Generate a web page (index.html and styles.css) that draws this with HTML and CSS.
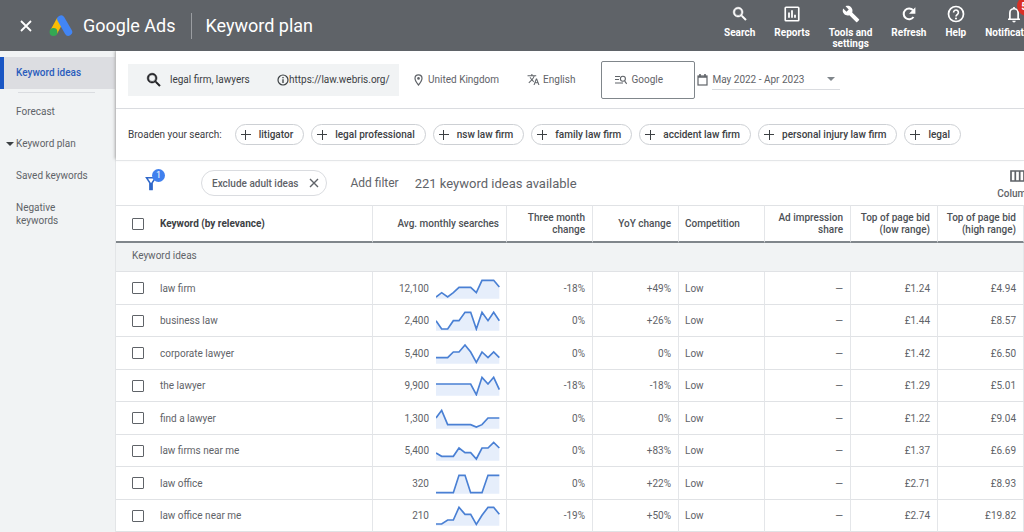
FILE: index.html
```html
<!DOCTYPE html>
<html lang="en">
<head>
<meta charset="utf-8">
<title>Keyword plan - Google Ads</title>
<link rel="stylesheet" href="styles.css">
</head>
<body>
<header class="topbar">
  <button class="close" aria-label="Close"><svg width="12" height="12" viewBox="0 0 12 12"><path d="M1 1l10 10M11 1L1 11" stroke="#fff" stroke-width="1.8"/></svg></button>
  <svg class="logo" width="24" height="22" viewBox="0 0 24 22"><path d="M4.400 17.500L11.500 4.600" stroke="#fbbc04" stroke-width="7.600" stroke-linecap="butt"/><path d="M12 4.200L19.400 17" stroke="#4285f4" stroke-width="7.600" stroke-linecap="round"/><circle cx="4.500" cy="17" r="3.900" fill="#34a853"/></svg>
  <span class="brand">Google Ads</span>
  <h1 class="title">Keyword plan</h1>
  <nav class="tools">
    <button class="tool"><svg width="18" height="18" viewBox="0 0 24 24"><path fill="#fff" stroke="#fff" stroke-width=".7" d="M15.500 14h-.8l-.3-.3A6.500 6.500 0 1 0 13.700 14.400l.3.300v.8l5 5 1.500-1.500zm-6 0a4.500 4.500 0 1 1 0-9 4.500 4.500 0 0 1 0 9z"/></svg>Search</button>
    <button class="tool"><svg width="18" height="18" viewBox="0 0 24 24"><rect x="3" y="3" width="18" height="18" rx="1" fill="none" stroke="#fff" stroke-width="2.200"/><path d="M8 17v-7M12 17V7M16 17v-4" stroke="#fff" stroke-width="2.400"/></svg>Reports</button>
    <button class="tool"><svg width="18" height="18" viewBox="0 0 24 24"><path fill="#fff" d="M22.700 19l-9.100-9.100c.9-2.300.4-5-1.500-6.900-2-2-5-2.400-7.400-1.300L9 6 6 9 1.600 4.700C.4 7.100.9 10.100 2.900 12.100c1.900 1.900 4.600 2.400 6.900 1.500l9.100 9.100c.4.400 1 .4 1.400 0l2.300-2.300c.5-.4.5-1.100.1-1.400z"/></svg>Tools and<br>settings</button>
    <button class="tool"><svg width="18" height="18" viewBox="0 0 24 24"><path d="M18 16A7.200 7.200 0 1 1 17.500 7" fill="none" stroke="#fff" stroke-width="2.700"/><path fill="#fff" d="M20.500 3v8.500H12z"/></svg>Refresh</button>
    <button class="tool"><svg width="18" height="18" viewBox="0 0 24 24"><circle cx="12" cy="12" r="10" fill="none" stroke="#fff" stroke-width="2.300"/><path d="M8.800 10a3.200 3.200 0 1 1 5.200 2.400c-1.200 1-2 1.400-2 3" fill="none" stroke="#fff" stroke-width="2.200"/><circle cx="12" cy="18" r="1.400" fill="#fff"/></svg>Help</button>
    <button class="tool"><svg width="18" height="18" viewBox="0 0 24 24"><path d="M4 19h16M6.500 18v-7.500a5.500 5.500 0 0 1 11 0V18M12 5V2.500" fill="none" stroke="#fff" stroke-width="2.300"/><path fill="#fff" d="M9.700 21h4.600a2.300 2.300 0 0 1-4.600 0z"/></svg><span class="alert">5</span>Notifications</button>
  </nav>
</header>
<div class="layout">
  <nav class="sidebar">
    <a class="side active" href="#ideas">Keyword ideas</a>
    <a class="side first" href="#forecast">Forecast</a>
    <a class="side parent" href="#plan">Keyword plan</a>
    <a class="side" href="#saved">Saved keywords</a>
    <a class="side" href="#negative">Negative<br>keywords</a>
  </nav>
  <main class="main">
    <div class="upper">
      <div class="settings">
        <div class="searchbox">
          <svg width="18" height="18" viewBox="0 0 24 24"><path fill="#202124" stroke="#202124" stroke-width=".7" d="M15.500 14h-.8l-.3-.3A6.500 6.500 0 1 0 13.700 14.400l.3.300v.8l5 5 1.500-1.500zm-6 0a4.500 4.500 0 1 1 0-9 4.500 4.500 0 0 1 0 9z"/></svg>
          <input class="terms" aria-label="Keywords" value="legal firm, lawyers">
          <svg width="12" height="12" viewBox="0 0 12 12"><circle cx="6" cy="6" r="5" fill="none" stroke="#3c4043" stroke-width="1.200"/><path d="M6 5.200V9M6 3v1.300" stroke="#3c4043" stroke-width="1.300"/></svg>
          <input class="site" aria-label="Website" value="https://law.webris.org/">
        </div>
        <button class="setting place"><svg width="9" height="12" viewBox="0 0 9 12"><path d="M4.500 11C2 8 1 6 1 4.300a3.500 3.500 0 0 1 7 0C8 6 7 8 4.500 11z" fill="none" stroke="#5f6368" stroke-width="1.200"/><circle cx="4.500" cy="4.400" r="1.300" fill="#5f6368"/></svg>United Kingdom</button>
        <button class="setting language"><svg width="13" height="13" viewBox="0 0 24 24"><path fill="#5f6368" d="M12.900 15.100l-2.600-2.500c1.800-2 3-4.200 3.800-6.600H17V4h-7V2H8v2H1v2h11.200c-.7 1.900-1.800 3.800-3.200 5.300-.9-1-1.600-2.100-2.200-3.300h-2c.7 1.600 1.700 3.200 3 4.600L2.700 17.600 4 19l5-5 3.100 3.100zM18.500 10h-2L12 22h2l1.100-3h4.800l1.100 3h2zm-2.600 7l1.600-4.300L19.100 17z"/></svg>English</button>
        <button class="network"><svg width="12" height="10" viewBox="0 0 12 10"><path d="M0 1.500h5M0 4.500h4M0 8h8M9.700 6.200l2 2.600" stroke="#5f6368" stroke-width="1.100"/><circle cx="7.900" cy="3.800" r="2.500" fill="none" stroke="#5f6368" stroke-width="1.100"/></svg>Google</button>
        <svg class="calendar" width="11" height="12" viewBox="0 0 11 12"><rect x="1" y="2" width="9" height="9" fill="none" stroke="#5f6368" stroke-width="1.200"/><path d="M1 3h9M3 0v3M8 0v3" stroke="#5f6368" stroke-width="1.600"/></svg>
        <button class="dates">May 2022 - Apr 2023<span class="caret"></span></button>
      </div>
      <div class="broaden">
        <span class="broaden-label">Broaden your search:</span>
        <button class="chip">litigator</button>
        <button class="chip">legal professional</button>
        <button class="chip">nsw law firm</button>
        <button class="chip">family law firm</button>
        <button class="chip">accident law firm</button>
        <button class="chip">personal injury law firm</button>
        <button class="chip">legal</button>
      </div>
    </div>
    <div class="filters">
      <button class="funnel" aria-label="Filters"><svg width="13" height="15" viewBox="0 0 13 15"><path d="M1.500 1.700h9L7 7v6.500H5V7z" fill="#fff" stroke="#2f67c9" stroke-width="1.500"/><path d="M6 7v7" stroke="#2f67c9" stroke-width="3"/></svg><span class="count">1</span></button>
      <button class="filter-chip">Exclude adult ideas<svg width="10" height="10" viewBox="0 0 10 10"><path d="M1 1l8 8M9 1L1 9" stroke="#5f6368" stroke-width="1.400"/></svg></button>
      <button class="add">Add filter</button>
      <span class="available">221 keyword ideas available</span>
      <button class="columns"><svg width="15" height="12" viewBox="0 0 15 12"><path d="M1 1h13v10H1zM5.300 1v10M9.700 1v10" fill="none" stroke="#5f6368" stroke-width="1.700"/></svg>Columns</button>
    </div>
    <table class="ideas">
      <colgroup><col><col class="c-search"><col class="c-std"><col class="c-std"><col class="c-std"><col class="c-std"><col class="c-low"><col class="c-std"></colgroup>
      <thead>
        <tr><th class="key"><label><input type="checkbox" class="check">Keyword (by relevance)</label></th><th>Avg. monthly searches</th><th>Three month change</th><th>YoY change</th><th class="left">Competition</th><th>Ad impression share</th><th>Top of page bid (low range)</th><th>Top of page bid (high range)</th></tr>
      </thead>
      <tbody>
        <tr class="group"><td colspan="8">Keyword ideas</td></tr>
        <tr><td class="key"><label><input type="checkbox" class="check">law firm</label></td><td><div class="volume">12,100<svg class="spark" viewBox="0 0 192 63"><path class="area" d="M0 57L17 44 35 57 52 44 69 28H104L121 44 138 7H173L190 27V62H0z"/><path class="line" d="M0 57L17 44 35 57 52 44 69 28H104L121 44 138 7H173L190 27"/></svg></div></td><td>-18%</td><td>+49%</td><td class="left">Low</td><td>—</td><td>£1.24</td><td>£4.94</td></tr>
        <tr><td class="key"><label><input type="checkbox" class="check">business law</label></td><td><div class="volume">2,400<svg class="spark" viewBox="0 0 192 63"><path class="area" d="M0 32L17 57H35L52 32H69L87 7H104L121 57 138 7 156 32 173 7 190 32V62H0z"/><path class="line" d="M0 32L17 57H35L52 32H69L87 7H104L121 57 138 7 156 32 173 7 190 32"/></svg></div></td><td>0%</td><td>+26%</td><td class="left">Low</td><td>—</td><td>£1.44</td><td>£8.57</td></tr>
        <tr><td class="key"><label><input type="checkbox" class="check">corporate lawyer</label></td><td><div class="volume">5,400<svg class="spark" viewBox="0 0 192 63"><path class="area" d="M0 44H35L52 27H69L87 6 104 27 121 58 138 27 156 44 173 27 190 44V62H0z"/><path class="line" d="M0 44H35L52 27H69L87 6 104 27 121 58 138 27 156 44 173 27 190 44"/></svg></div></td><td>0%</td><td>0%</td><td class="left">Low</td><td>—</td><td>£1.42</td><td>£6.50</td></tr>
        <tr><td class="key"><label><input type="checkbox" class="check">the lawyer</label></td><td><div class="volume">9,900<svg class="spark" viewBox="0 0 192 63"><path class="area" d="M0 27H104L121 59 138 7 156 27 173 7 190 44V62H0z"/><path class="line" d="M0 27H104L121 59 138 7 156 27 173 7 190 44"/></svg></div></td><td>-18%</td><td>-18%</td><td class="left">Low</td><td>—</td><td>£1.29</td><td>£5.01</td></tr>
        <tr><td class="key"><label><input type="checkbox" class="check">find a lawyer</label></td><td><div class="volume">1,300<svg class="spark" viewBox="0 0 192 63"><path class="area" d="M0 30L17 7 35 50H104L121 57 138 50 156 30H190V62H0z"/><path class="line" d="M0 30L17 7 35 50H104L121 57 138 50 156 30H190"/></svg></div></td><td>0%</td><td>0%</td><td class="left">Low</td><td>—</td><td>£1.22</td><td>£9.04</td></tr>
        <tr><td class="key"><label><input type="checkbox" class="check">law firms near me</label></td><td><div class="volume">5,400<svg class="spark" viewBox="0 0 192 63"><path class="area" d="M0 39L17 49H52L69 24 87 38H104L121 57 138 24H156L173 7 190 24V62H0z"/><path class="line" d="M0 39L17 49H52L69 24 87 38H104L121 57 138 24H156L173 7 190 24"/></svg></div></td><td>0%</td><td>+83%</td><td class="left">Low</td><td>—</td><td>£1.37</td><td>£6.69</td></tr>
        <tr><td class="key"><label><input type="checkbox" class="check">law office</label></td><td><div class="volume">320<svg class="spark" viewBox="0 0 192 63"><path class="area" d="M0 59H52L69 7H87L104 59H138L156 7H190V62H0z"/><path class="line" d="M0 59H52L69 7H87L104 59H138L156 7H190"/></svg></div></td><td>0%</td><td>+22%</td><td class="left">Low</td><td>—</td><td>£2.71</td><td>£8.93</td></tr>
        <tr><td class="key"><label><input type="checkbox" class="check">law office near me</label></td><td><div class="volume">210<svg class="spark" viewBox="0 0 192 63"><path class="area" d="M0 57H17L35 45H52L69 7 87 28H104L121 58 138 31 156 7H173L190 28V62H0z"/><path class="line" d="M0 57H17L35 45H52L69 7 87 28H104L121 58 138 31 156 7H173L190 28"/></svg></div></td><td>-19%</td><td>+50%</td><td class="left">Low</td><td>—</td><td>£2.74</td><td>£19.82</td></tr>
      </tbody>
    </table>
  </main>
</div>
</body>
</html>
```

FILE: styles.css
```css
* { box-sizing: border-box; }
html { overflow: hidden; }
body {
  margin: 0;
  min-height: 100vh;
  display: flex;
  flex-direction: column;
  font-family: Roboto, "Liberation Sans", sans-serif;
  font-size: 10px;
  color: #5f6368;
  background: #fff;
}
button, input { font: inherit; color: inherit; border: 0; background: none; padding: 0; margin: 0; }
button { display: flex; align-items: center; white-space: nowrap; flex: none; }
svg { flex: none; display: block; }

.topbar {
  position: relative;
  z-index: 1;
  display: flex;
  align-items: center;
  height: 51px;
  padding-left: 20px;
  background: #5f6368;
  color: #fff;
  overflow: hidden;
}
.logo { margin: 0 10px 0 17px; }
.brand { font-size: 18px; font-weight: 400; padding-right: 16px; border-right: 1px solid #9a9da1; line-height: 26px; white-space: nowrap; }
.title { margin: 0 0 0 13px; font-size: 18px; font-weight: 400; white-space: nowrap; }
.tools { display: flex; gap: 19px; margin: 0 -19px 0 auto; align-self: stretch; padding-top: 5px; }
.tool { position: relative; flex-direction: column; justify-content: flex-start; gap: 4px; font-weight: 700; line-height: 11px; text-align: center; }
.alert { position: absolute; top: -9px; left: 32px; width: 20px; height: 20px; padding-left: 4px; border-radius: 50%; background: #d93025; font-size: 11px; line-height: 22px; text-align: left; }

.layout { display: flex; flex: 1; }
.sidebar {
  flex: none;
  width: 116px;
  padding-top: 6px;
  background: #f1f3f4;
  border-right: 1px solid #e3e5e7;
}
.side { display: block; color: #5f6368; text-decoration: none; line-height: 13px; padding: 0 16px; margin-bottom: 19px; }
.side.active { line-height: 32px; margin-bottom: 3px; padding-left: 12px; border-left: 4px solid #1a56c4; background: #dcdde1; color: #2a5cbd; font-weight: 500; }
.side.first::before { content: ""; display: block; border-top: 1px solid #dadce0; margin: 0 4px 12px 2px; }
.side.parent { display: flex; align-items: center; padding-left: 6px; }
.parent::before { content: ""; border: 4px solid transparent; border-top-color: #3c4043; border-bottom: 0; margin-right: 2px; }

.main { flex: 1; min-width: 0; }
.upper { border-bottom: 1px solid #e4e6e8; background: #fff; box-shadow: -2px -1px 3px -1px #aaa; }
.settings { display: flex; align-items: center; height: 58px; padding-left: 12px; border-bottom: 1px solid #dadce0; }
.searchbox { display: flex; align-items: center; flex: none; width: 271px; height: 32px; padding-left: 17px; background: #f1f3f4; color: #3c4043; }
.terms { width: 107px; margin-left: 7px; }
.site { width: 110px; }
.place { gap: 5px; margin-left: 15px; }
.language { gap: 3px; margin-left: 28px; }
.network { width: 94px; height: 38px; margin-left: 26px; padding-left: 13px; gap: 4px; border: 1px solid #80868b; border-radius: 2px; }
.calendar { margin: 0 4px 0 2px; }
.dates { justify-content: space-between; width: 128px; height: 20px; padding-right: 5px; border-bottom: 1px solid #dadce0; }
.caret { border: 4px solid transparent; border-top-color: #80868b; border-bottom: 0; }

.broaden { display: flex; align-items: center; gap: 7px; height: 51px; padding-left: 12px; }
.broaden-label { white-space: nowrap; color: #3c4043; margin-right: 6px; }
.chip { height: 21px; padding: 0 10px 0 5px; border: 1px solid #cdd0d4; border-radius: 11px; color: #3c4043; font-weight: 500; }
.chip::before { content: ""; width: 10px; height: 10px; margin-right: 8px; background: linear-gradient(#3c4043, #3c4043) center / 10px 1px no-repeat, linear-gradient(#3c4043, #3c4043) center / 1px 10px no-repeat; }

.filters { display: flex; align-items: center; height: 44px; padding-left: 29px; }
.funnel { position: relative; width: 13px; height: 15px; }
.count { position: absolute; left: 7px; top: -7px; width: 13px; height: 13px; border-radius: 50%; background: #4080ee; color: #fff; font-size: 9px; line-height: 13px; text-align: center; }
.filter-chip { height: 26px; margin-left: 43px; padding: 0 7px 0 10px; gap: 11px; border: 1px solid #dadce0; border-radius: 13px; font-weight: 500; }
.add { margin-left: 23px; font-size: 12px; }
.available { margin-left: 16px; font-size: 13px; white-space: nowrap; }
.columns { flex-direction: column; gap: 6px; margin: 3px -13px 0 auto; font-weight: 500; line-height: 11px; }

.ideas { width: 100%; table-layout: fixed; border-collapse: separate; border-spacing: 0; }
.c-search { width: 134px; }
.c-std { width: 86px; }
.c-low { width: 87px; }
.ideas th, .ideas td { padding: 0 7px; text-align: right; border-right: 1px solid #e4e6e9; border-bottom: 1px solid #e0e2e5; }
.ideas th { height: 38px; border-top: 1px solid #e0e2e5; border-bottom: 2px solid #80868b; font-weight: 500; line-height: 12px; color: #4d5156; }
.ideas .key { padding: 0 0 0 16px; text-align: left; }
.ideas th.key { font-weight: 700; color: #3c4043; }
.ideas .left { text-align: left; padding-left: 6px; }
.ideas td { height: 32px; }
.ideas tr:nth-child(even) td { height: 33px; }
.ideas .group td { height: 29px; padding: 0 0 4px 16px; text-align: left; background: #f1f3f4; }
.key label { display: flex; align-items: center; gap: 16px; }
.check { appearance: none; width: 12px; height: 12px; border: 1px solid #5f6368; border-radius: 1px; background: #fff; }
.volume { display: flex; align-items: center; justify-content: flex-end; gap: 7px; margin-right: -1px; }
.spark { width: 64px; height: 21px; }
.area { fill: #e6eefb; }
.line { fill: none; stroke: #4a80d4; stroke-width: 5; }
```
